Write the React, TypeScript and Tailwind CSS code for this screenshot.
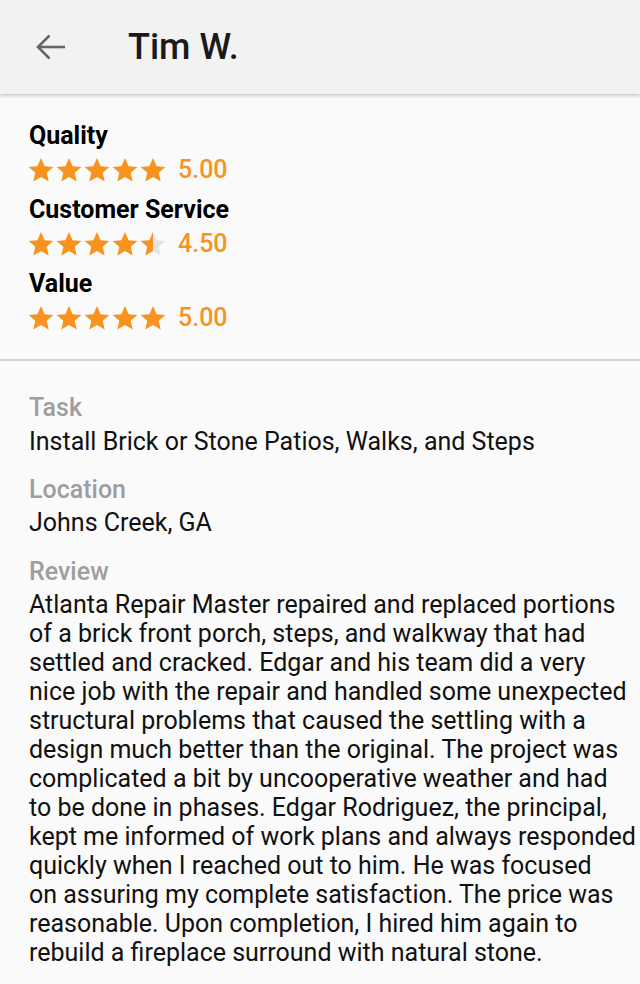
const STAR = 'M12 1.8l3.1 6.9 7.5.7-5.7 5 1.7 7.4L12 17.9l-6.6 3.9 1.7-7.4-5.7-5 7.5-.7z';

function Star({ fill }: { fill: 'full' | 'half' | 'empty' }) {
  return (
    <svg viewBox="0 0 24 24" className="w-[28px] h-[28px]">
      <defs>
        <clipPath id="half-left">
          <rect x="0" y="0" width="12" height="24" />
        </clipPath>
      </defs>
      {fill === 'half' ? (
        <>
          <path d={STAR} fill="#e3e3e3" />
          <path d={STAR} fill="#f7931e" clipPath="url(#half-left)" />
        </>
      ) : (
        <path d={STAR} fill={fill === 'full' ? '#f7931e' : '#e3e3e3'} />
      )}
    </svg>
  );
}

function Rating({ label, score }: { label: string; score: number }) {
  const stars = [0, 1, 2, 3, 4].map((i) => {
    if (score >= i + 1) return 'full' as const;
    if (score >= i + 0.5) return 'half' as const;
    return 'empty' as const;
  });
  return (
    <div>
      <div className="text-[25px] leading-[30px] font-bold text-black">{label}</div>
      <div className="flex items-center mt-[2px] h-[34px]">
        <div className="flex -ml-[2px]">
          {stars.map((s, i) => (
            <Star key={i} fill={s} />
          ))}
        </div>
        <span className="ml-[11px] text-[25px] font-medium text-[#f7931e]">{score.toFixed(2)}</span>
      </div>
    </div>
  );
}

const review = [
  'Atlanta Repair Master repaired and replaced portions',
  'of a brick front porch, steps, and walkway that had',
  'settled and cracked. Edgar and his team did a very',
  'nice job with the repair and handled some unexpected',
  'structural problems that caused the settling with a',
  'design much better than the original. The project was',
  'complicated a bit by uncooperative weather and had',
  'to be done in phases. Edgar Rodriguez, the principal,',
  'kept me informed of work plans and always responded',
  'quickly when I reached out to him. He was focused',
  'on assuring my complete satisfaction. The price was',
  'reasonable. Upon completion, I hired him again to',
  'rebuild a fireplace surround with natural stone.',
];

export default function App() {
  return (
    <div
      className="min-h-screen bg-[#fafafa] text-[#111]"
      style={{ fontFamily: 'Roboto, "Noto Sans", sans-serif' }}
    >
      <header className="h-[94px] bg-[#f2f2f2] flex items-center shadow-[0_2px_3px_rgba(0,0,0,0.18)] relative">
        <svg viewBox="0 0 32 28" className="ml-[34px] w-[32px] h-[28px]" fill="none" stroke="#666" strokeWidth={2.6}>
          <path d="M31 14H4" />
          <path d="M15.5 2.5L4 14l11.5 11.5" />
        </svg>
        <h1 className="ml-[62px] text-[36px] font-medium text-[#1a1a1a]">Tim W.</h1>
      </header>

      <section className="px-[29px] pt-[27px] pb-[24px] flex flex-col gap-[8px]">
        <Rating label="Quality" score={5} />
        <Rating label="Customer Service" score={4.5} />
        <Rating label="Value" score={5} />
      </section>

      <div className="h-[2px] bg-[#d2d2d2]" />

      <section className="px-[29px] pt-[31px] pb-6">
        <div className="text-[25px] leading-[32px] font-medium text-[#9e9e9e]">Task</div>
        <div className="mt-[2px] text-[25px] leading-[32px] text-[#111]">Install Brick or Stone Patios, Walks, and Steps</div>
        <div className="mt-[16px] text-[25px] leading-[32px] font-medium text-[#9e9e9e]">Location</div>
        <div className="mt-[1px] text-[25px] leading-[32px] text-[#111]">Johns Creek, GA</div>
        <div className="mt-[17px] text-[25px] leading-[32px] font-medium text-[#9e9e9e]">Review</div>
        <p className="mt-[2px] text-[25px] leading-[29px] text-[#111]">
          {review.map((line, i) => (
            <span key={i} className="block whitespace-nowrap">
              {line}
            </span>
          ))}
        </p>
      </section>
    </div>
  );
}
